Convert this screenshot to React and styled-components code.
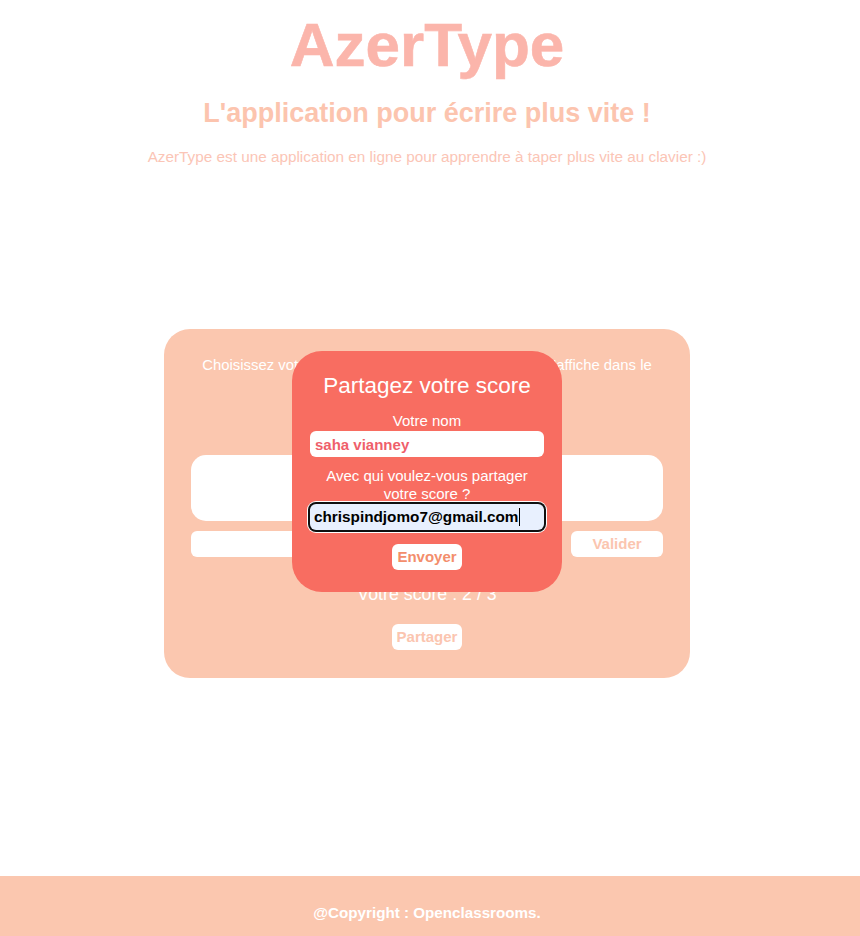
import React from "react";
import styled, { createGlobalStyle } from "styled-components";

const GlobalStyle = createGlobalStyle`
  html, body {
    margin: 0;
    padding: 0;
    background: #ffffff;
  }
  body {
    font-family: "Liberation Sans", Arial, sans-serif;
  }
  * {
    box-sizing: border-box;
  }
`;

const Page = styled.div`
  min-height: 100vh;
  display: flex;
  flex-direction: column;
`;

const Header = styled.header`
  padding: 14px 6px 0 0;
  text-align: center;
`;

const Title = styled.h1`
  margin: 0;
  font-size: 62px;
  line-height: 61px;
  font-weight: 700;
  color: #fbb5ab;
  -webkit-text-stroke: 0.6px #fbb5ab;
`;

const Subtitle = styled.h2`
  margin: 25px 0 0;
  font-size: 27px;
  line-height: 27px;
  font-weight: 700;
  color: #fcc4ae;
`;

const Intro = styled.p`
  margin: 22px 0 0;
  font-size: 15.3px;
  line-height: 15px;
  color: #fbc5b6;
`;

const Main = styled.main`
  display: flex;
  justify-content: center;
  padding: 165px 6px 0 0;
`;

const Card = styled.section`
  position: relative;
  width: 526px;
  padding: 27px 27px 28px;
  border-radius: 26px;
  background: #fbc7af;
  display: flex;
  flex-direction: column;
  align-items: center;
  color: #ffffff;
`;

const Instructions = styled.p`
  margin: 0;
  font-size: 14.87px;
  line-height: 18px;
  text-align: center;
`;

const Options = styled.div`
  display: flex;
  gap: 16px;
  height: 21px;
  margin: 16px 0 26px;
  font-size: 15px;
  align-items: center;
`;

const Option = styled.label`
  display: flex;
  align-items: center;
  gap: 4px;
`;

const WordZone = styled.div`
  width: 100%;
  height: 66px;
  border-radius: 15px;
  background: #ffffff;
  display: flex;
  align-items: center;
  justify-content: center;
  font-size: 22px;
  color: #fbc7af;
`;

const InputRow = styled.div`
  width: 100%;
  display: flex;
  gap: 14px;
  margin-top: 10px;
`;

const TypeInput = styled.input`
  flex: 1;
  height: 26px;
  border: none;
  border-radius: 6px;
  background: #ffffff;
  font: 15px "Liberation Sans", Arial, sans-serif;
`;

const LightButton = styled.button`
  height: 26px;
  width: ${(p) => p.$width || "auto"};
  padding: 0 5px;
  border: none;
  border-radius: 6px;
  background: #ffffff;
  color: ${(p) => p.$color || "#fbc5af"};
  font: 700 15px/26px "Liberation Sans", Arial, sans-serif;
  cursor: pointer;
`;

const Score = styled.p`
  margin: 27px 0 19px;
  font-size: 17.8px;
  line-height: 21px;
`;

const Popup = styled.div`
  position: absolute;
  top: 22px;
  left: 50%;
  transform: translateX(-50%);
  width: 270px;
  padding: 22px 18px 22px;
  border-radius: 30px;
  background: #f86d61;
  display: flex;
  flex-direction: column;
  align-items: center;
  color: #ffffff;
  text-align: center;
`;

const PopupTitle = styled.h3`
  margin: 0;
  font-size: 22.5px;
  line-height: 26px;
  font-weight: 400;
`;

const FieldLabel = styled.label`
  display: block;
  margin-top: ${(p) => p.$gap || "10px"};
  font-size: 15px;
  line-height: 18px;
`;

const NameInput = styled.input`
  width: 100%;
  height: 26px;
  margin-top: 1px;
  padding: 0 5px;
  border: none;
  border-radius: 6px;
  background: #ffffff;
  color: #ef5f6b;
  font: 700 15px "Liberation Sans", Arial, sans-serif;
  outline: none;
`;

const FocusedField = styled.div`
  width: 100%;
  height: 26px;
  margin-top: 1px;
  padding: 0 4px;
  border-radius: 6px;
  background: #e8f0fe;
  color: #000000;
  font: 700 15.3px "Liberation Sans", Arial, sans-serif;
  display: flex;
  align-items: center;
  text-align: left;
  box-shadow: 0 0 0 2px #101010, 0 0 0 3px #ffffff;
`;

const Caret = styled.span`
  display: inline-block;
  width: 1px;
  height: 18px;
  margin-left: 1px;
  background: #000000;
`;

const SendButton = styled(LightButton)`
  margin-top: 14px;
`;

const Footer = styled.footer`
  margin-top: auto;
  height: 60px;
  padding: 28px 6px 0 0;
  background: #fbc7af;
  text-align: center;
  color: #ffffff;
  font-size: 15.2px;
  line-height: 17px;
  font-weight: 700;
`;

export default function App() {
  return (
    <Page>
      <GlobalStyle />
      <Header>
        <Title>AzerType</Title>
        <Subtitle>L'application pour écrire plus vite !</Subtitle>
        <Intro>
          AzerType est une application en ligne pour apprendre à taper plus vite au clavier :)
        </Intro>
      </Header>
      <Main>
        <Card>
          <Instructions>
            Choisissez votre mode de jeu, puis tapez le mot qui s'affiche dans le cadre
            ci-dessous :
          </Instructions>
          <Options>
            <Option>
              <input type="radio" name="mode" defaultChecked /> Mots
            </Option>
            <Option>
              <input type="radio" name="mode" /> Phrases
            </Option>
          </Options>
          <WordZone>Cachalot</WordZone>
          <InputRow>
            <TypeInput type="text" aria-label="Votre saisie" />
            <LightButton $width="92px">Valider</LightButton>
          </InputRow>
          <Score>Votre score : 2 / 3</Score>
          <LightButton>Partager</LightButton>

          <Popup>
            <PopupTitle>Partagez votre score</PopupTitle>
            <FieldLabel $gap="13px" htmlFor="nom">
              Votre nom
            </FieldLabel>
            <NameInput id="nom" type="text" defaultValue="saha vianney" />
            <FieldLabel htmlFor="email">Avec qui voulez-vous partager votre score ?</FieldLabel>
            <FocusedField id="email">
              <span>chrispindjomo7@gmail.com</span>
              <Caret />
            </FocusedField>
            <SendButton $color="#f38e6c">Envoyer</SendButton>
          </Popup>
        </Card>
      </Main>
      <Footer>@Copyright : Openclassrooms.</Footer>
    </Page>
  );
}
